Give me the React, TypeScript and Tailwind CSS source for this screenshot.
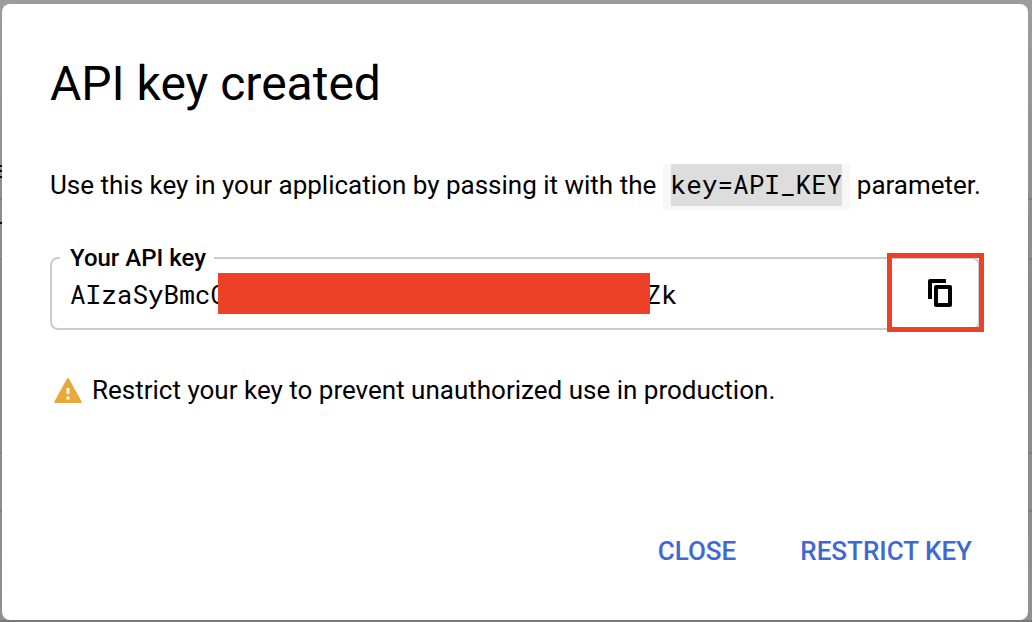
import React from 'react';

const CopyIcon = () => (
  <svg xmlns="http://www.w3.org/2000/svg" className="h-7 w-6" viewBox="0 0 24 28" fill="currentColor" aria-hidden="true">
    <path d="M2 0H18V4H4V20H0V2Q0 0 2 0Z" />
    <path fillRule="evenodd" d="M8 6H22Q24 6 24 8V26Q24 28 22 28H8Q6 28 6 26V8Q6 6 8 6ZM10 10V24H20V10Z" />
  </svg>
);

const WarningIcon = () => (
  <svg xmlns="http://www.w3.org/2000/svg" className="h-[25px] w-7 shrink-0" viewBox="0 0 28 25" aria-hidden="true">
    <path fill="#e8a93a" d="M1 25Q-.4 25 .4 23.4L12.8 1Q14 -.8 15.2 1L27.6 23.4Q28.4 25 27 25Z" />
    <path fill="#fff" d="M12.6 10H15.4V16H12.6ZM12.6 18.5H15.4V21.5H12.6Z" />
  </svg>
);

function PageBehind() {
  return (
    <div className="absolute inset-0 border-b-2 border-[#787878] bg-linear-to-b from-[#9c9c9c] via-[#888888] to-[#909090]" aria-hidden="true">
      <div className="absolute top-[198px] h-0.5 w-full bg-[#7e7e7e]" />
      <div className="absolute top-[258px] h-0.5 w-full bg-[#7e7e7e]" />
      <div className="absolute top-[452px] h-0.5 w-full bg-[#7e7e7e]" />
      <div className="absolute top-[510px] h-0.5 w-full bg-[#7e7e7e]" />
      <div className="absolute top-[165px] h-[13px] w-0.5 border-y-2 border-black" />
      <div className="absolute top-[170px] h-0.5 w-0.5 bg-black" />
      <div className="absolute top-[222px] h-0.5 w-0.5 bg-black" />
    </div>
  );
}

function KeyField() {
  return (
    <div className="relative mt-[33px] mr-2">
      <fieldset className="h-[87px] rounded-lg border-2 border-[#cccccc] pl-2">
        <legend className="pr-2 pl-2.5 text-2xl leading-[30px] font-medium">Your API key</legend>
        <div className="flex items-center pl-2.5 font-['Roboto_Mono','DejaVu_Sans_Mono',monospace] text-[26px] leading-10">
          <span>AIzaSyBmcC</span>
          <span className="z-10 -mr-1 -ml-2 h-[41px] w-[432px] bg-[#ec4027]" />
          <span>Zk</span>
        </div>
      </fieldset>
      <button
        type="button"
        aria-label="Copy API key"
        className="absolute -right-1 -bottom-0.5 flex h-[79px] w-[97px] items-center justify-center border-5 border-[#ec4027] pl-2"
      >
        <CopyIcon />
      </button>
    </div>
  );
}

export default function App(): React.ReactElement {
  return (
    <main className="relative min-h-screen pt-1 pr-1 pb-0.5 pl-0.5 font-[Roboto,sans-serif] text-black">
      <PageBehind />
      <section
        role="dialog"
        aria-labelledby="dialog-title"
        className="relative flex min-h-[616px] flex-col rounded-lg bg-white pt-12 pr-10 pl-12"
      >
        <h1 id="dialog-title" className="text-5xl leading-16">API key created</h1>
        <p className="mt-12 text-[26px] leading-10">
          Use this key in your application by passing it with the{' '}
          <code className="inline-block border-r-8 border-b-4 border-l-8 border-[#f7f7f7] bg-[#dddddd] pb-0.5 font-['Roboto_Mono','DejaVu_Sans_Mono',monospace]">
            key=API_KEY
          </code>{' '}
          parameter.
        </p>
        <KeyField />
        <p className="mt-10 flex items-center gap-2.5 pl-1 text-[26px] leading-10">
          <WarningIcon />
          Restrict your key to prevent unauthorized use in production.
        </p>
        <div className="mt-auto mb-[49px] flex justify-end gap-16 pr-4 text-[26px] leading-10 font-medium text-[#3f69d2]">
          <button type="button">CLOSE</button>
          <button type="button">RESTRICT KEY</button>
        </div>
      </section>
    </main>
  );
}
